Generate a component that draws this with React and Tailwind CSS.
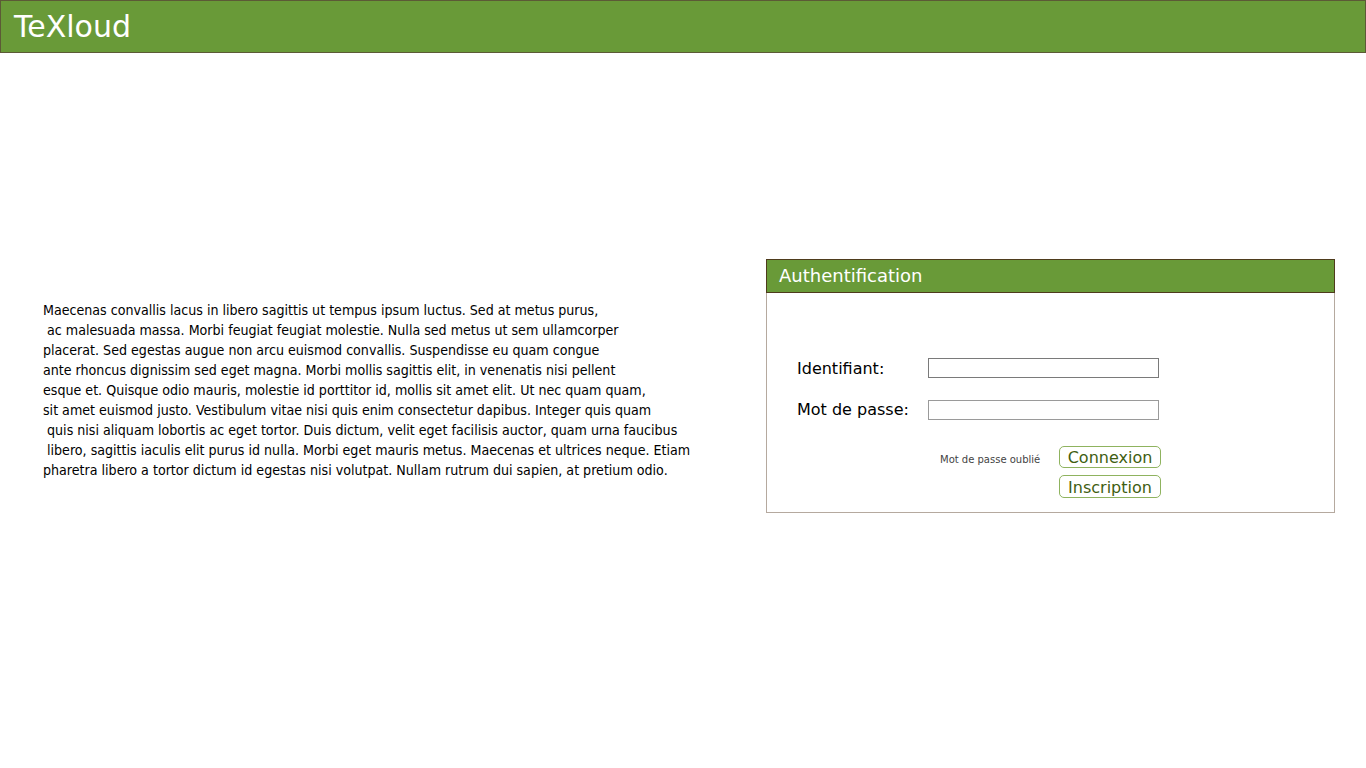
import React from 'react';

const lines = [
  'Maecenas convallis lacus in libero sagittis ut tempus ipsum luctus. Sed at metus purus,',
  ' ac malesuada massa. Morbi feugiat feugiat molestie. Nulla sed metus ut sem ullamcorper',
  'placerat. Sed egestas augue non arcu euismod convallis. Suspendisse eu quam congue',
  'ante rhoncus dignissim sed eget magna. Morbi mollis sagittis elit, in venenatis nisi pellent',
  'esque et. Quisque odio mauris, molestie id porttitor id, mollis sit amet elit. Ut nec quam quam,',
  'sit amet euismod justo. Vestibulum vitae nisi quis enim consectetur dapibus. Integer quis quam',
  ' quis nisi aliquam lobortis ac eget tortor. Duis dictum, velit eget facilisis auctor, quam urna faucibus',
  ' libero, sagittis iaculis elit purus id nulla. Morbi eget mauris metus. Maecenas et ultrices neque. Etiam',
  'pharetra libero a tortor dictum id egestas nisi volutpat. Nullam rutrum dui sapien, at pretium odio.',
];

const App = () => {
  return (
    <div className="min-h-[768px] bg-white font-['DejaVu_Sans',sans-serif]">
      <header className="h-[53px] bg-[#699a38] border border-[#5c5a36] flex items-center pl-[13px]">
        <h1 className="text-[30px] text-white leading-none">TeXloud</h1>
      </header>

      <main className="flex items-start pl-[43px]">
        <div className="w-[723px] pt-[247px] font-['DejaVu_Sans_Condensed',sans-serif] text-[14.1px] leading-[20px] text-black whitespace-pre">
          {lines.map((l, i) => (
            <div key={i}>{l}</div>
          ))}
        </div>

        <section className="mt-[206px] w-[569px] h-[254px] border border-[#b5a99f] flex flex-col">
          <div className="h-[34px] bg-[#699a38] border border-[#4e3b1c] -mx-px -mt-px flex items-center pl-[12px] pb-[1px]">
            <h2 className="text-[18px] text-white">Authentification</h2>
          </div>

          <div className="pt-[65px] pl-[30px]">
            <div className="flex items-center h-[20px]">
              <label className="w-[131px] text-[16px] text-black pt-[2px]">Identifiant:</label>
              <input type="text" className="w-[231px] h-[20px] border border-[#7a7a7a] outline-none" />
            </div>
            <div className="flex items-center h-[20px] mt-[22px]">
              <label className="w-[131px] text-[16px] text-black">Mot de passe:</label>
              <input type="password" className="w-[231px] h-[20px] border border-[#9a9a9a] outline-none" />
            </div>

            <div className="flex items-start mt-[26px] pl-[143px]">
              <a className="text-[10px] text-[#444] w-[119px] pt-[6px]">Mot de passe oublié</a>
              <div className="flex flex-col gap-[7px]">
                <button className="w-[102px] h-[22px] rounded-[5px] border border-[#8fb35f] text-[#3f5e12] text-[16px] leading-none flex items-center justify-center pt-[2px]">
                  Connexion
                </button>
                <button className="w-[102px] h-[23px] rounded-[5px] border border-[#8fb35f] text-[#3f5e12] text-[16px] leading-none flex items-center justify-center pt-[2px]">
                  Inscription
                </button>
              </div>
            </div>
          </div>
        </section>
      </main>
    </div>
  );
};

export default App;
